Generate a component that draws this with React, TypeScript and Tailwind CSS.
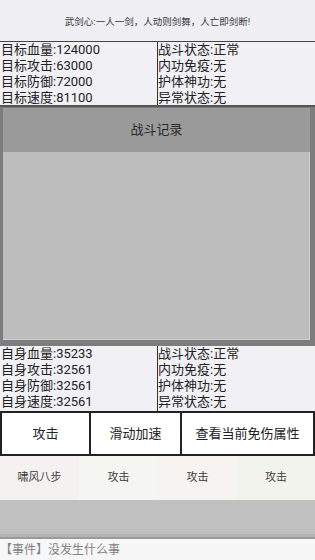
import React from "react";

const font = { fontFamily: 'Roboto, "Noto Sans CJK SC", "Noto Sans", sans-serif' };

function StatBlock({ left, right, h }: { left: string[]; right: string[]; h: string }) {
  return (
    <div className={`flex ${h} bg-[#f1f1f5] text-[13px] leading-[16px] text-[#222]`}>
      <div className="flex w-[157px] flex-col">
        {left.map((t) => (
          <div key={t} className="h-[16px] whitespace-nowrap pl-[1px]">{t}</div>
        ))}
      </div>
      <div className="w-[1px] bg-[#333]" />
      <div className="flex flex-1 flex-col">
        {right.map((t) => (
          <div key={t} className="h-[16px] whitespace-nowrap">{t}</div>
        ))}
      </div>
    </div>
  );
}

export default function App() {
  const statusR = ["战斗状态:正常", "内功免疫:无", "护体神功:无", "异常状态:无"];
  return (
    <div className="flex h-[560px] w-[315px] flex-col overflow-hidden bg-[#f4f4f6]" style={font}>
      <div className="flex h-[41px] items-center justify-center bg-[#efeff3] pt-[3px] text-[9.5px] text-[#3a3a3a]">
        武剑心:一人一剑，人动则剑舞，人亡即剑断!
      </div>
      <div className="h-[1px] bg-[#444]" />
      <StatBlock
        h="h-[63px]"
        left={["目标血量:124000", "目标攻击:63000", "目标防御:72000", "目标速度:81100"]}
        right={statusR}
      />
      <div className="h-[2px] bg-[#555]" />
      <div className="flex h-[239px] flex-col bg-[#7d7d7d] pb-[6px] pl-[3px] pr-[5px] pt-[1px]">
        <div className="flex h-[44px] items-center justify-center bg-[#9a9a9a] text-[13px] text-[#2a2a2a]">
          战斗记录
        </div>
        <div className="flex-1 border-b border-r border-[#d0d0d0] bg-[#bdbdbd]" />
      </div>
      <StatBlock
        h="h-[65px]"
        left={["自身血量:35233", "自身攻击:32561", "自身防御:32561", "自身速度:32561"]}
        right={statusR}
      />
      <div className="flex h-[45px] border-2 border-[#222] bg-white text-[13px] text-[#222]">
        <div className="flex w-[89px] items-center justify-center border-r-2 border-[#222]">攻击</div>
        <div className="flex w-[91px] items-center justify-center border-r-2 border-[#222]">滑动加速</div>
        <div className="flex flex-1 items-center justify-center">查看当前免伤属性</div>
      </div>
      <div className="flex h-[44px] text-[11px] text-[#3a3a3a]">
        <div className="flex w-[79px] items-center justify-center bg-[#f6f1f1]">啸风八步</div>
        <div className="flex w-[79px] items-center justify-center bg-[#f5f5f2]">攻击</div>
        <div className="flex w-[79px] items-center justify-center bg-[#f7f3f0]">攻击</div>
        <div className="flex flex-1 items-center justify-center bg-[#f3f3ee]">攻击</div>
      </div>
      <div className="h-[37px] border-b-[3px] border-[#b4b4b4] bg-[#c0c0c0]" />
      <div className="h-[2px] bg-[#9a9a9a]" />
      <div className="flex flex-1 items-center bg-[#f7f7f7] pt-[1px] text-[12px] text-[#808080]">
        【事件】没发生什么事
      </div>
    </div>
  );
}
